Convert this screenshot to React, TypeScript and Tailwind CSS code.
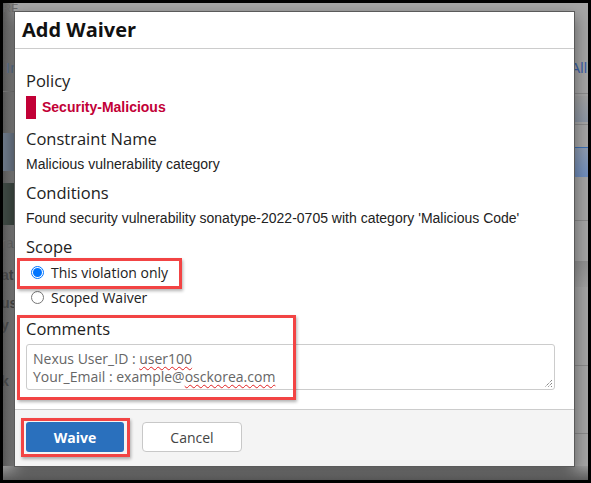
import React from "react";

const sans = { fontFamily: '"Open Sans", "Noto Sans", sans-serif' };
const arial = { fontFamily: '"Liberation Sans", Arial, sans-serif' };

function Radio({ checked }: { checked?: boolean }) {
  return checked ? (
    <span className="flex h-[13px] w-[13px] items-center justify-center rounded-full border border-[#0075ff] bg-white">
      <span className="h-[9px] w-[9px] rounded-full bg-[#0075ff]" />
    </span>
  ) : (
    <span className="h-[13px] w-[13px] rounded-full border border-[#767676] bg-white" />
  );
}

export default function App() {
  return (
    <div className="h-[483px] w-[591px] bg-black p-[3px]">
      <div className="relative h-full w-full overflow-hidden bg-[#a5a5a5]">
        {/* dimmed background page fragments */}
        <div className="absolute left-0 top-0 h-full w-[11px] bg-gradient-to-r from-[#5a5a5a] to-[#8a8a8a]" />
        <div className="absolute left-0 top-[-3px] text-[11px] text-[#6a6a6a]" style={arial}>RE</div>
        <div className="absolute left-[3px] top-[54px] text-[15px] text-[#5a6f8a]" style={arial}>In</div>
        <div className="absolute left-0 top-[88px] h-px w-[11px] bg-[#777]" />
        <div className="absolute left-0 top-[130px] h-[38px] w-[11px] bg-[#6e7a8a]" />
        <div className="absolute left-0 top-[180px] h-[42px] w-[11px] bg-[#3f4a44]" />
        <div className="absolute left-[-2px] top-[230px] text-[14px] text-[#6a6a6a]" style={arial}>ra</div>
        <div className="absolute left-[-2px] top-[262px] text-[14px] font-bold text-[#4a4a4a]" style={arial}>at</div>
        <div className="absolute left-[-2px] top-[290px] text-[14px] font-bold text-[#4a4a4a]" style={arial}>us</div>
        <div className="absolute left-[-2px] top-[312px] text-[14px] font-bold text-[#4a4a4a]" style={arial}>y</div>
        <div className="absolute left-[-2px] top-[368px] text-[14px] font-bold text-[#4a4a4a]" style={arial}>k</div>

        <div className="absolute right-[1px] top-[54px] text-[15px] text-[#3b5fa8]" style={arial}>All</div>
        <div className="absolute right-0 top-[90px] h-px w-[20px] bg-[#8a8a8a]" />
        <div className="absolute right-0 top-[93px] h-[26px] w-[20px] bg-gradient-to-b from-[#a0a0a0] to-[#8c96a4]" />
        <div className="absolute right-0 top-[121px] h-px w-[20px] bg-[#8a8a8a]" />
        <div className="absolute right-0 top-[144px] h-[30px] w-[20px] border-t border-[#3a6fb5] bg-gradient-to-b from-[#8d9bb0] to-[#6f8dbd]" />
        <div className="absolute right-0 top-[217px] h-px w-[20px] bg-[#8a8a8a]" />
        <div className="absolute right-0 top-[258px] h-[26px] w-[20px] bg-gradient-to-b from-[#8f8f8f] to-[#a0a0a0]" />
        <div className="absolute right-0 top-[362px] h-px w-[20px] bg-[#8a8a8a]" />
        <div className="absolute right-0 top-[430px] h-px w-[20px] bg-[#8a8a8a]" />
        <div className="absolute bottom-0 left-0 h-[14px] w-full bg-gradient-to-b from-[#9a9a9a] to-[#5e5e5e]" />

        {/* modal */}
        <div
          className="absolute left-[11px] top-[8px] flex h-[456px] w-[561px] flex-col border border-[#5a5a5a] bg-white shadow-[0_6px_14px_rgba(0,0,0,0.45)]"
          style={sans}
        >
          <div className="flex h-[37px] items-center border-b border-[#cccccc] px-[7px]">
            <span className="text-[20px] font-bold text-[#111]">Add Waiver</span>
          </div>

          <div className="flex flex-1 flex-col px-[11px] pt-[18px]">
            <div className="flex h-[24px] items-center pt-[4px] text-[16.5px] text-[#222]">Policy</div>
            <div className="mt-[5px] flex h-[23px] items-center">
              <span className="h-[23px] w-[10px] bg-[#c20036]" />
              <span className="ml-[6px] text-[14px] font-bold text-[#c20036]" style={arial}>
                Security-Malicious
              </span>
            </div>
            <div className="mt-[6px] flex h-[24px] items-center pt-[4px] text-[16.5px] text-[#222]">Constraint Name</div>
            <div className="mt-[6px] flex h-[18px] items-center text-[14px] text-[#222]" style={arial}>
              Malicious vulnerability category
            </div>
            <div className="mt-[6px] flex h-[24px] items-center pt-[4px] text-[16.5px] text-[#222]">Conditions</div>
            <div className="mt-[6px] flex h-[18px] items-center text-[14px] text-[#222]" style={arial}>
              Found security vulnerability sonatype-2022-0705 with category 'Malicious Code'
            </div>
            <div className="mt-[6px] flex h-[24px] items-center pt-[4px] text-[16.5px] text-[#222]">Scope</div>
            <div className="mt-[3px] flex h-[24px] items-center pl-[5px] text-[14px] text-[#222]">
              <Radio checked />
              <span className="ml-[7px]">This violation only</span>
            </div>
            <div className="mt-[1px] flex h-[24px] items-center pl-[5px] text-[14px] text-[#222]">
              <Radio />
              <span className="ml-[7px]">Scoped Waiver</span>
            </div>
            <div className="mt-[6px] flex h-[24px] items-center pt-[4px] text-[16.5px] text-[#222]">Comments</div>
            <div className="relative mt-[5px] h-[46px] w-[529px] rounded-[3px] border border-[#cccccc] px-[6px] pt-[5px] text-[14px] leading-[18px] text-[#666]">
              <div>
                Nexus User_ID :{" "}
                <span className="underline decoration-[#e02020] decoration-wavy decoration-1 underline-offset-2">user100</span>
              </div>
              <div>
                Your_Email : example@
                <span className="underline decoration-[#e02020] decoration-wavy decoration-1 underline-offset-2">osckorea.com</span>
              </div>
              <svg className="absolute bottom-[1px] right-[1px]" width="9" height="9" viewBox="0 0 9 9">
                <path d="M8 1 L1 8 M8 4 L4 8 M8 7 L7 8" stroke="#555" strokeWidth="1" strokeDasharray="1 1" />
              </svg>
            </div>
          </div>

          <div className="flex h-[57px] items-start gap-[17px] border-t border-[#cccccc] bg-[#f4f4f4] px-[11px] pt-[12px]">
            <button className="h-[30px] w-[98px] rounded-[3px] bg-[#2a70bd] text-[14px] font-bold text-white">
              Waive
            </button>
            <button className="ml-[1px] h-[30px] w-[100px] rounded-[4px] border border-[#c8c8c8] bg-white text-[14px] text-[#444]">
              Cancel
            </button>
          </div>

          {/* annotation boxes */}
          <div className="pointer-events-none absolute left-[2px] top-[246px] h-[31px] w-[165px] border-[3px] border-[#f24444] shadow-[1px_2px_3px_rgba(0,0,0,0.3)]" />
          <div className="pointer-events-none absolute left-[2px] top-[303px] h-[85px] w-[279px] border-[3px] border-[#f24444] shadow-[1px_2px_3px_rgba(0,0,0,0.3)]" />
          <div className="pointer-events-none absolute left-[6px] top-[406px] h-[39px] w-[109px] border-[3px] border-[#f24444] shadow-[1px_2px_3px_rgba(0,0,0,0.3)]" />
        </div>
      </div>
    </div>
  );
}
